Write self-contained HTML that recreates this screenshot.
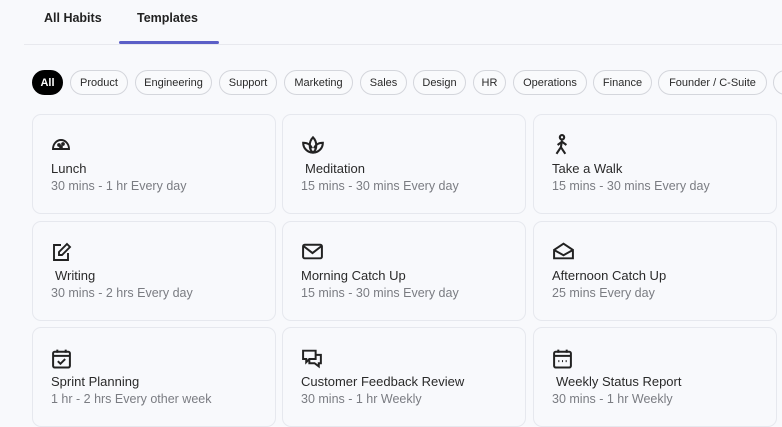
<!DOCTYPE html>
<html><head><meta charset="utf-8"><style>
*{margin:0;padding:0;box-sizing:border-box}
body{width:782px;height:423px;overflow:hidden;background:#f8f9fc;font-family:"Liberation Sans",sans-serif;position:relative;color:#222}
.tab{position:absolute;top:11px;font-size:12.5px;font-weight:bold;color:#222}
.pill{position:absolute;top:70px;height:25px;border:1px solid #d4d6dc;border-radius:13px;font-size:11px;display:flex;align-items:center;justify-content:center;color:#2a2a2a;background:#f9fafc;white-space:nowrap}
.card{position:absolute;width:244px;height:100px;border:1px solid #e6e8ee;border-radius:9px;background:#f8f9fc}
.card svg{position:absolute;left:18px;top:19px}
.t{position:absolute;left:18px;top:46px;font-size:13px;color:#2a2a2a}
.s{position:absolute;left:18px;top:64px;font-size:12.5px;color:#7a7c82}
</style></head><body>
<div class="tab" style="left:44px">All Habits</div>
<div class="tab" style="left:137px">Templates</div>
<div style="position:absolute;left:24px;top:44px;width:758px;height:1px;background:#e8e9ee"></div>
<div style="position:absolute;left:119px;top:41px;width:100px;height:3px;border-radius:2px;background:#5b5fc7"></div>

<div class="pill" style="left:32px;width:31px;background:#000;color:#fff;border-color:#000;font-weight:bold">All</div>
<div class="pill" style="left:70px;width:58px">Product</div>
<div class="pill" style="left:135px;width:77px">Engineering</div>
<div class="pill" style="left:219px;width:58px">Support</div>
<div class="pill" style="left:284px;width:69px">Marketing</div>
<div class="pill" style="left:360px;width:47px">Sales</div>
<div class="pill" style="left:413px;width:53px">Design</div>
<div class="pill" style="left:473px;width:33px">HR</div>
<div class="pill" style="left:513px;width:74px">Operations</div>
<div class="pill" style="left:593px;width:59px">Finance</div>
<div class="pill" style="left:658px;width:109px">Founder / C-Suite</div>
<div class="pill" style="left:773px;width:40px"></div>

<div class="card" style="left:32px;top:114px"><svg width="20" height="20" viewBox="0 0 20 20" fill="none" stroke="#222" stroke-width="1.9"><path d="M2 15 A8 9 0 0 1 18 15 Z"/><circle cx="8" cy="11" r=".9" fill="#222"/><circle cx="12" cy="10" r=".9" fill="#222"/><circle cx="10" cy="13" r=".9" fill="#222"/></svg><div class="t">Lunch</div><div class="s">30 mins - 1 hr Every day</div></div>
<div class="card" style="left:282px;top:114px"><svg width="24" height="22" viewBox="0 0 22 20" fill="none" stroke="#222" stroke-width="1.9"><path d="M11 17C7 14 7 7 11 3C15 7 15 14 11 17Z"/><path d="M11 17C6 17 2 13 2 8C6 8 9 10 10 13"/><path d="M11 17C16 17 20 13 20 8C16 8 13 10 12 13"/></svg><div class="t" style="left:22px">Meditation</div><div class="s">15 mins - 30 mins Every day</div></div>
<div class="card" style="left:533px;top:114px"><svg width="20" height="22" viewBox="0 0 18 20" fill="none" stroke="#222" stroke-width="1.9"><circle cx="9" cy="3" r="2"/><path d="M9 6L8 12L4 18M8 12L12 18M9 7L5 10M9 7L13 10"/></svg><div class="t">Take a Walk</div><div class="s">15 mins - 30 mins Every day</div></div>

<div class="card" style="left:32px;top:221px"><svg width="22" height="22" viewBox="0 0 22 20" fill="none" stroke="#222" stroke-width="1.9"><path d="M10 3H3V18H17V11"/><path d="M16 2L19 5L11 13H8V10Z"/></svg><div class="t" style="left:22px">Writing</div><div class="s">30 mins - 2 hrs Every day</div></div>
<div class="card" style="left:282px;top:221px"><svg width="23" height="20" viewBox="0 0 22 18" fill="none" stroke="#222" stroke-width="1.9"><rect x="2" y="3" width="18" height="13" rx="1.5"/><path d="M2 4L11 11L20 4"/></svg><div class="t">Morning Catch Up</div><div class="s">15 mins - 30 mins Every day</div></div>
<div class="card" style="left:533px;top:221px"><svg width="23" height="20" viewBox="0 0 22 18" fill="none" stroke="#222" stroke-width="1.9"><path d="M2 8L11 2L20 8V16H2Z"/><path d="M2 8L11 13L20 8"/></svg><div class="t">Afternoon Catch Up</div><div class="s">25 mins Every day</div></div>

<div class="card" style="left:32px;top:327px"><svg width="21" height="22" viewBox="0 0 20 20" fill="none" stroke="#222" stroke-width="1.9"><rect x="2" y="4" width="16" height="15" rx="1.5"/><path d="M2 8H18M6 2V5M14 2V5M6.5 13L9 15.5L13.5 11"/></svg><div class="t">Sprint Planning</div><div class="s">1 hr - 2 hrs Every other week</div></div>
<div class="card" style="left:282px;top:327px"><svg width="23" height="22" viewBox="0 0 22 20" fill="none" stroke="#222" stroke-width="1.9"><path d="M2 3H14V11H8L5 14V11H2Z"/><path d="M14 7H19V15H17V18L13 15H8V12"/></svg><div class="t">Customer Feedback Review</div><div class="s">30 mins - 1 hr Weekly</div></div>
<div class="card" style="left:533px;top:327px"><svg width="21" height="22" viewBox="0 0 20 20" fill="none" stroke="#222" stroke-width="1.9"><rect x="2" y="4" width="16" height="15" rx="1.5"/><path d="M2 8H18M6 2V5M14 2V5"/><path d="M6 13H7M9.5 13H10.5M13 13H14"/></svg><div class="t" style="left:22px">Weekly Status Report</div><div class="s">30 mins - 1 hr Weekly</div></div>
</body></html>
